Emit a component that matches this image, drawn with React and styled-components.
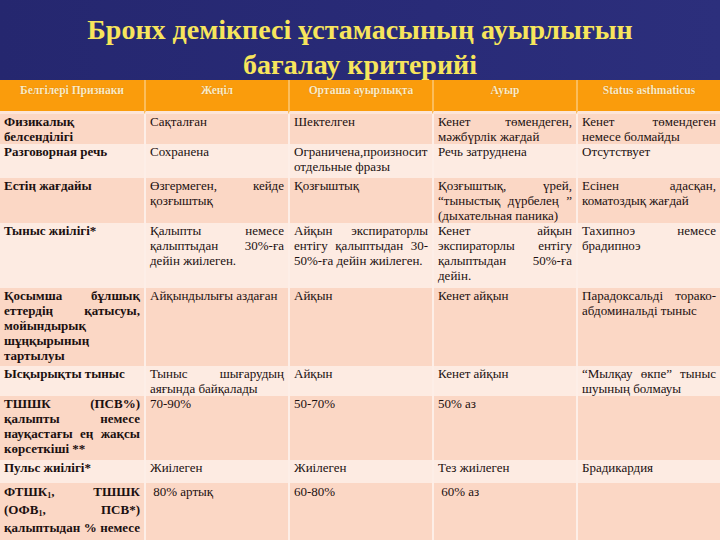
import React from "react";
import styled, { createGlobalStyle } from "styled-components";

const GlobalStyle = createGlobalStyle`
  html, body {
    margin: 0;
    padding: 0;
    background: #262873;
  }
  #root {
    width: 720px;
    height: 540px;
    overflow: hidden;
  }
`;

const Slide = styled.div`
  width: 720px;
  height: 540px;
  overflow: hidden;
  background: linear-gradient(90deg, #25276f 0%, #292b78 60%, #2c2f7c 100%);
  font-family: "Liberation Serif", "Times New Roman", serif;
`;

const Title = styled.h1`
  box-sizing: border-box;
  height: 80px;
  margin: 0;
  padding-top: 12px;
  text-align: center;
  color: #f7e55c;
  font-family: "Liberation Serif", "Times New Roman", serif;
  font-size: 28px;
  font-weight: bold;
  line-height: 35px;
`;

const Table = styled.table`
  width: 720px;
  table-layout: fixed;
  border-collapse: separate;
  border-spacing: 0;
  font-family: "Liberation Serif", "Times New Roman", serif;
  font-size: 13px;
`;

const HeadRow = styled.tr`
  height: 34px;
  background: #fa9c0c;
`;

const HeadCell = styled.th`
  padding: 3px 2px 0;
  vertical-align: top;
  text-align: center;
  color: #fdebc4;
  font-family: "Liberation Serif", "Times New Roman", serif;
  font-size: 11.5px;
  font-weight: bold;
  line-height: 14px;
  text-shadow: 0 0 1px rgba(120, 60, 0, 0.4);
  border-left: ${p => (p.$first ? "none" : "2px solid #fbbd5c")};
  border-bottom: 3px solid #fde5d8;
`;

const Row = styled.tr`
  height: ${p => p.$h}px;
  background: ${p => (p.$light ? "#fdebe2" : "#fbd7c5")};
`;

const Cell = styled.td`
  padding: 0 4px;
  vertical-align: top;
  text-align: justify;
  color: #1b1010;
  font-family: "Liberation Serif", "Times New Roman", serif;
  font-size: 13px;
  line-height: ${p => (p.$tall ? "18px" : "15px")};
  font-weight: ${p => (p.$first ? "bold" : "normal")};
  border-left: ${p => (p.$first ? "none" : "2px solid #fdeee7")};
  overflow: hidden;

  sub {
    font-size: 8px;
    line-height: 0;
    vertical-align: -2px;
  }
`;

const headers = ["Белгілері Признаки", "Жеңіл", "Орташа ауырлықта", "Ауыр", "Status asthmaticus"];

const rows = [
  {
    h: 28,
    cells: ["Физикалық белсенділігі", "Сақталған", "Шектелген", "Кенет төмендеген, мәжбүрлік жағдай", "Кенет төмендеген немесе болмайды"],
  },
  {
    h: 34,
    light: true,
    cells: ["Разговорная речь", "Сохранена", "Ограничена,произносит отдельные фразы", "Речь затруднена", "Отсутствует"],
  },
  {
    h: 43,
    cells: [
      "Естің жағдайы",
      "Өзгермеген, кейде қозғыштық",
      "Қозғыштық",
      "Қозғыштық, үрей, “тыныстық дүрбелең ” (дыхательная паника)",
      "Есінен адасқан, коматоздық жағдай",
    ],
  },
  {
    h: 65,
    light: true,
    cells: [
      "Тыныс жиілігі*",
      "Қалыпты немесе қалыптыдан 30%-ға дейін жиілеген.",
      "Айқын экспираторлы ентігу қалыптыдан 30-50%-ға дейін жиілеген.",
      "Кенет айқын экспираторлы ентігу қалыптыдан 50%-ға дейін.",
      "Тахипноэ немесе брадипноэ",
    ],
  },
  {
    h: 78,
    cells: [
      "Қосымша бұлшық еттердің қатысуы, мойындырық шұңқырының тартылуы",
      "Айқындылығы аздаған",
      "Айқын",
      "Кенет айқын",
      "Парадоксальді торако-абдоминальді тыныс",
    ],
  },
  {
    h: 30,
    light: true,
    cells: ["Ысқырықты тыныс", "Тыныс шығарудың аяғында байқалады", "Айқын", "Кенет айқын", "“Мылқау өкпе” тыныс шуының болмауы"],
  },
  {
    h: 64,
    cells: ["ТШШК (ПСВ%) қалыпты немесе науқастағы ең жақсы көрсеткіші **", "70-90%", "50-70%", "50% аз", ""],
  },
  {
    h: 23,
    light: true,
    cells: ["Пульс жиілігі*", "Жиілеген", "Жиілеген", "Тез жиілеген", "Брадикардия"],
  },
  {
    h: 90,
    tall: true,
    cells: [
      <>
        ФТШК<sub>1</sub>, ТШШК (ОФВ<sub>1</sub>, ПСВ*) қалыптыдан % немесе науқастағы ең жақсы көрсеткіші
      </>,
      "\u00a080% артық",
      "60-80%",
      "\u00a060% аз",
      "",
    ],
  },
];

export default function App() {
  return (
    <>
      <GlobalStyle />
      <Slide>
        <Title>
          Бронх демікпесі ұстамасының ауырлығын
          <br />
          бағалау критерийі
        </Title>
        <Table>
          <colgroup>
            {headers.map(h => (
              <col key={h} style={{ width: 144 }} />
            ))}
          </colgroup>
          <thead>
            <HeadRow>
              {headers.map((h, i) => (
                <HeadCell key={h} $first={i === 0}>
                  {h}
                </HeadCell>
              ))}
            </HeadRow>
          </thead>
          <tbody>
            {rows.map((row, r) => (
              <Row key={r} $h={row.h} $light={row.light}>
                {row.cells.map((c, i) => (
                  <Cell key={i} $first={i === 0} $tall={row.tall}>
                    {c}
                  </Cell>
                ))}
              </Row>
            ))}
          </tbody>
        </Table>
      </Slide>
    </>
  );
}
